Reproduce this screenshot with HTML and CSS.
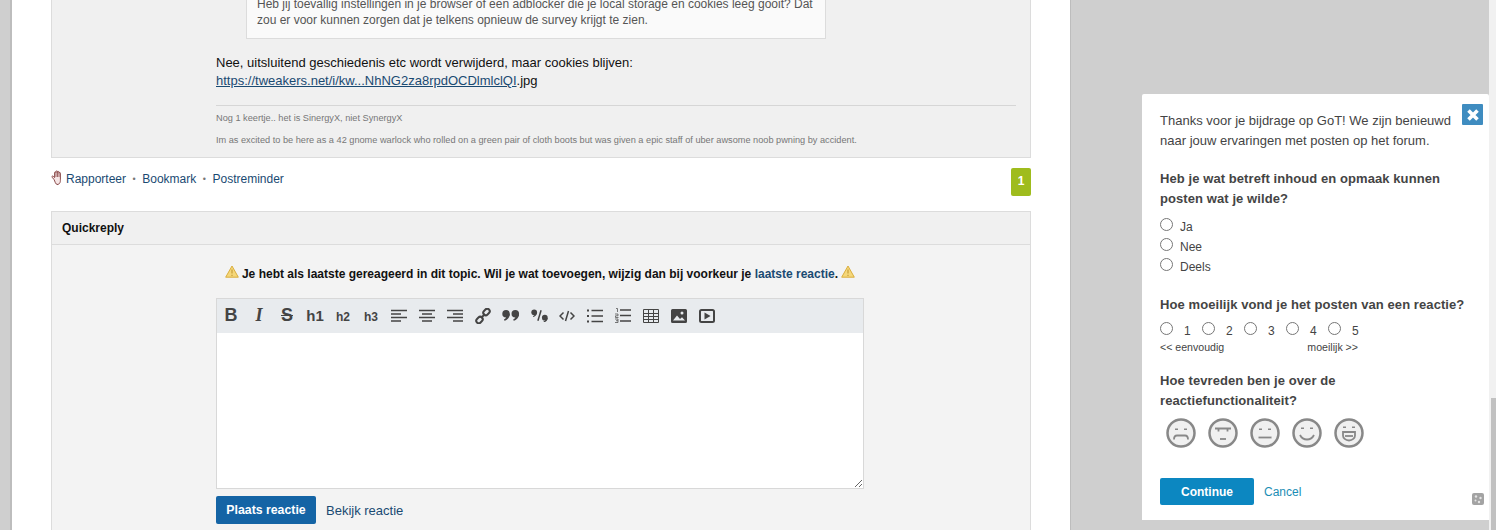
FILE: index.html
```html
<!DOCTYPE html>
<html lang="nl">
<head>
<meta charset="utf-8">
<title>Quickreply</title>
<link rel="stylesheet" href="styles.css">
</head>
<body>
<div class="page">
  <div class="gutter"></div>
  <main class="main">
    <section class="post">
      <blockquote class="quote">Heb jij toevallig instellingen in je browser of een adblocker die je local storage en cookies leeg gooit? Dat zou er voor kunnen zorgen dat je telkens opnieuw de survey krijgt te zien.</blockquote>
      <p class="post-text">Nee, uitsluitend geschiedenis etc wordt verwijderd, maar cookies blijven:<br><a href="#" class="post-link">https://tweakers.net/i/kw...NhNG2za8rpdOCDlmlclQI</a>.jpg</p>
      <div class="signature">
        <p class="sig-line sig-first">Nog 1 keertje.. het is SinergyX, niet SynergyX</p>
        <p class="sig-line">Im as excited to be here as a 42 gnome warlock who rolled on a green pair of cloth boots but was given a epic staff of uber awsome noob pwning by accident.</p>
      </div>
    </section>

    <div class="actions">
      <svg class="hand" viewBox="0 0 14 16" width="14" height="16"><path d="M3 9.500 1.200 7.300c-.8-.8.3-1.800 1.100-1L3.600 7.600V2.600c0-1 1.400-1 1.400 0V1.600c0-1 1.500-1 1.500 0v.6c0-1 1.500-1 1.500 0v1c0-1 1.400-1 1.400 0v6.600c0 .6.3 4.700-3.400 4.700H6.300C4.500 14.500 4 11.200 3 9.500Z" fill="#f6e6e6" stroke="#8a4a4a" stroke-width="1"/><path d="M5 2.500V7M6.500 2V7M8 2.500V7" stroke="#8a4a4a" stroke-width=".8" fill="none"/></svg>
      <a href="#" class="act-link">Rapporteer</a><span class="dot">•</span><a href="#" class="act-link">Bookmark</a><span class="dot">•</span><a href="#" class="act-link">Postreminder</a>
      <span class="badge">1</span>
    </div>

    <section class="reply">
      <h2 class="reply-head">Quickreply</h2>
      <div class="reply-body">
        <p class="notice"><svg class="warn" viewBox="0 0 14 13" width="14" height="13"><path d="M7 1 13.300 12.200H.7Z" fill="#f5d77a" stroke="#d9ad3c" stroke-width="1" stroke-linejoin="round"/><path d="M7 4.500v4M7 9.700v1.200" stroke="#c9a23f" stroke-width="1.300"/></svg> Je hebt als laatste gereageerd in dit topic. Wil je wat toevoegen, wijzig dan bij voorkeur je <a href="#" class="notice-link">laatste reactie</a>. <svg class="warn" viewBox="0 0 14 13" width="14" height="13"><path d="M7 1 13.300 12.200H.7Z" fill="#f5d77a" stroke="#d9ad3c" stroke-width="1" stroke-linejoin="round"/><path d="M7 4.500v4M7 9.700v1.200" stroke="#c9a23f" stroke-width="1.300"/></svg></p>
        <div class="editor">
          <div class="toolbar">
            <span class="tool tool-b">B</span>
            <span class="tool tool-i">I</span>
            <span class="tool tool-s">S</span>
            <span class="tool tool-h1">h1</span>
            <span class="tool tool-h">h2</span>
            <span class="tool tool-h">h3</span>
            <span class="tool"><svg viewBox="0 0 16 14" width="16" height="14"><path d="M0 1.500h16M0 5h10M0 8.500h16M0 12h10" stroke="#444" stroke-width="1.600"/></svg></span>
            <span class="tool"><svg viewBox="0 0 16 14" width="16" height="14"><path d="M0 1.500h16M3 5h10M0 8.500h16M3 12h10" stroke="#444" stroke-width="1.600"/></svg></span>
            <span class="tool"><svg viewBox="0 0 16 14" width="16" height="14"><path d="M0 1.500h16M6 5h10M0 8.500h16M6 12h10" stroke="#444" stroke-width="1.600"/></svg></span>
            <span class="tool"><svg viewBox="0 0 16 16" width="16" height="16"><g fill="none" stroke="#444" stroke-width="2"><rect x="8" y="1.500" width="7" height="5" rx="2.500" transform="rotate(-45 11.500 4)"/><rect x="1" y="9.500" width="7" height="5" rx="2.500" transform="rotate(-45 4.500 12)"/><path d="M6 10 10 6"/></g></svg></span>
            <span class="tool"><svg viewBox="0 0 16 10" width="18" height="11"><g fill="#444"><circle cx="3.500" cy="3.500" r="3.400"/><circle cx="11.900" cy="3.500" r="3.400"/><path d="M6.900 3.500C6.900 7 4.500 9.300 2 9.800L1.700 8.500C3.200 7.800 3.800 6.800 3.800 5ZM15.300 3.500c0 3.500-2.400 5.800-4.900 6.300l-.3-1.300c1.500-.7 2.100-1.700 2.100-3.500Z"/></g></svg></span>
            <span class="tool"><svg viewBox="0 0 16 12" width="17" height="13"><g fill="#444"><circle cx="3" cy="3" r="2.700"/><circle cx="13" cy="8" r="2.700"/><path d="M5.700 3C5.700 5.500 4 7 2 7.500L1.800 6.600C3 6 3.500 5.300 3.500 4ZM15.700 8c0 2.500-1.700 4-3.700 4.500l-.2-.9c1.200-.6 1.700-1.300 1.700-2.600Z"/></g><path d="M9.500 1 6.500 11" stroke="#444" stroke-width="1.400"/></svg></span>
            <span class="tool"><svg viewBox="0 0 16 12" width="16" height="12"><path d="M4.500 2.500 1 6l3.500 3.500M11.500 2.500 15 6l-3.500 3.500M9.500 1 6.500 11" fill="none" stroke="#444" stroke-width="1.500"/></svg></span>
            <span class="tool"><svg viewBox="0 0 16 14" width="16" height="14"><path d="M4.500 1.500H16M4.500 7H16M4.500 12.500H16" stroke="#444" stroke-width="1.600"/><path d="M0 1.500h2M0 7h2M0 12.500h2" stroke="#444" stroke-width="2"/></svg></span>
            <span class="tool"><svg viewBox="0 0 16 15" width="16" height="15"><path d="M5 2H16M5 7.500H16M5 13H16" stroke="#444" stroke-width="1.600"/><path d="M1 .5h1.500V4M0 6h3v1.800H.5v1.700h3M0 11h3v3.500H0M1 12.700h2" fill="none" stroke="#444" stroke-width=".7"/></svg></span>
            <span class="tool"><svg viewBox="0 0 16 14" width="16" height="14"><path d="M.5.5h15v13H.5ZM.5 4.500h15M.5 7.500h15M.5 10.500h15M5.500.5v13M10.500.5v13" fill="none" stroke="#444" stroke-width="1"/></svg></span>
            <span class="tool"><svg viewBox="0 0 16 14" width="16" height="14"><path d="M1.500 0h13A1.500 1.500 0 0 1 16 1.500v11a1.500 1.500 0 0 1-1.500 1.500h-13A1.500 1.500 0 0 1 0 12.500v-11A1.500 1.500 0 0 1 1.500 0Z" fill="#444"/><path d="M2 11.500 6 6.500l3 3.500 2-1.800 3 3.300Z" fill="#e8ebee"/><circle cx="11" cy="4" r="1.500" fill="#e8ebee"/></svg></span>
            <span class="tool"><svg viewBox="0 0 16 14" width="16" height="14"><rect x="1" y="1" width="14" height="12" rx="1.500" fill="none" stroke="#444" stroke-width="2"/><path d="M5.500 3.500v7L11.500 7Z" fill="#444"/></svg></span>
          </div>
          <textarea class="editor-area" aria-label="Reactie"></textarea>
        </div>
        <div class="reply-buttons">
          <button class="btn-primary" type="button">Plaats reactie</button>
          <a href="#" class="preview-link">Bekijk reactie</a>
        </div>
      </div>
    </section>
  </main>
  <div class="side"></div>

  <aside class="survey">
    <button class="close" type="button" aria-label="Sluiten"><svg viewBox="0 0 14 14" width="14" height="14"><path d="M2.500 2.500 11.500 11.500M11.500 2.500 2.500 11.500" stroke="#fff" stroke-width="3.600"/></svg></button>
    <p class="intro">Thanks voor je bijdrage op GoT! We zijn benieuwd naar jouw ervaringen met posten op het forum.</p>
    <h3 class="question q-first">Heb je wat betreft inhoud en opmaak kunnen posten wat je wilde?</h3>
    <div class="choices">
      <label class="choice"><input type="radio" name="a"><span>Ja</span></label>
      <label class="choice"><input type="radio" name="a"><span>Nee</span></label>
      <label class="choice"><input type="radio" name="a"><span>Deels</span></label>
    </div>
    <h3 class="question q-second">Hoe moeilijk vond je het posten van een reactie?</h3>
    <div class="scale">
      <label class="scale-item"><input type="radio" name="b"><span>1</span></label>
      <label class="scale-item"><input type="radio" name="b"><span>2</span></label>
      <label class="scale-item"><input type="radio" name="b"><span>3</span></label>
      <label class="scale-item"><input type="radio" name="b"><span>4</span></label>
      <label class="scale-item"><input type="radio" name="b"><span>5</span></label>
    </div>
    <div class="scale-ends"><span>&lt;&lt; eenvoudig</span><span>moeilijk &gt;&gt;</span></div>
    <h3 class="question q-third">Hoe tevreden ben je over de reactiefunctionaliteit?</h3>
    <div class="smileys">
      <svg viewBox="0 0 30 30" width="30" height="30"><circle cx="15" cy="15" r="13.500" class="face"/><path d="M10.500 10.500v1.500M19.500 10.500v1.500" class="eye"/><path d="M8 21.500c0-3 1-4 3-4h8c2 0 3 1 3 4" class="mouth"/></svg>
      <svg viewBox="0 0 30 30" width="30" height="30"><circle cx="15" cy="15" r="13.500" class="face"/><path d="M7 10.500h16M10.500 11v2.500M19.500 11v2.500" class="mouth"/><path d="M12 21h6" class="mouth"/></svg>
      <svg viewBox="0 0 30 30" width="30" height="30"><circle cx="15" cy="15" r="13.500" class="face"/><path d="M10.500 10.500v1.500M19.500 10.500v1.500" class="eye"/><path d="M8.500 19.500h13" class="mouth"/></svg>
      <svg viewBox="0 0 30 30" width="30" height="30"><circle cx="15" cy="15" r="13.500" class="face"/><path d="M10.500 9.500v1.500M19.500 9.500v1.500" class="eye"/><path d="M8 17c1.500 3 3.500 4.500 7 4.500s5.500-1.500 7-4.500" class="mouth"/></svg>
      <svg viewBox="0 0 30 30" width="30" height="30"><circle cx="15" cy="15" r="13.500" class="face"/><path d="M10.500 8.500v1.500M19.500 8.500v1.500" class="eye"/><path d="M9 14h12v3.500c0 2.500-2.500 5-6 5s-6-2.500-6-5Z" class="mouth"/><path d="M11 18h8" class="mouth"/></svg>
    </div>
    <div class="survey-buttons">
      <button class="btn-continue" type="button">Continue</button>
      <a href="#" class="cancel">Cancel</a>
    </div>
    <svg class="brand" viewBox="0 0 12 12" width="12" height="12"><rect width="12" height="12" rx="2" fill="#a3a3a3"/><g fill="#e4e4e4"><circle cx="4" cy="3.500" r="1.200"/><circle cx="8.500" cy="5" r="1.200"/><circle cx="3.500" cy="7.500" r="1"/><circle cx="7" cy="9" r="1.200"/></g></svg>
  </aside>

  <div class="scrollbar"><div class="scroll-thumb"></div></div>
</div>
</body>
</html>
```

FILE: styles.css
```css
* { box-sizing: border-box; }
html, body { margin: 0; padding: 0; height: 100%; overflow: hidden; }
body { font-family: "Liberation Sans", Arial, sans-serif; font-size: 12px; color: #000; background: #cfcfcf; }
a { color: #1a4a72; text-decoration: none; }
p, h2, h3 { margin: 0; }

.page { display: flex; position: relative; width: 1496px; height: 530px; overflow: hidden; }
.gutter { flex: 0 0 12px; background: #cfcfcf; border-right: 2px solid #bdbdbd; }
.main { flex: 0 0 1059px; background: #fff; padding: 0 39px 0 39px; border-right: 1px solid #bdbdbd; }
.side { flex: 1; background: #cfcfcf; }

.post { display: flow-root; width: 980px; height: 158px; background: #f0f0f0; border: 1px solid #dcdcdc; border-top: 0; padding-left: 164px; padding-right: 14px; }
.quote { margin: -6px 0 0 30px; width: 580px; height: 45px; background: #fafafa; border: 1px solid #dcdcdc; border-top: 0; padding: 2px 10px 0; color: #555; font-size: 12px; line-height: 16px; }
.post-text { margin-top: 15px; font-size: 13px; line-height: 18px; color: #111; }
.post-link { color: #1a4a72; text-decoration: underline; }
.signature { margin-top: 15px; border-top: 1px solid #d6d6d6; padding-top: 6px; color: #777; font-size: 9.200px; }
.sig-line { line-height: 12px; margin-top: 10px; }
.sig-first { margin-top: 0; }

.actions { display: flex; align-items: flex-start; width: 980px; height: 53px; padding-top: 14px; font-size: 12px; position: relative; }
.hand { margin: -2px 1px 0 0; flex: none; }
.act-link { line-height: 14px; color: #1a4a72; }
.dot { width: 16.200px; text-align: center; color: #777; line-height: 14px; font-size: 9px; }
.badge { margin: -4px 0 0 auto; width: 20px; height: 28px; background: #9fbc1d; border-radius: 2px; color: #fff; font-weight: bold; text-align: center; line-height: 26px; font-size: 12px; }

.reply { width: 980px; border: 1px solid #dcdcdc; background: #f3f3f3; }
.reply-head { height: 33px; background: #f0f0f0; border-bottom: 1px solid #dcdcdc; padding-left: 10px; line-height: 32px; font-size: 12px; font-weight: bold; color: #111; }
.reply-body { padding: 20px 0 0 164px; height: 290px; }
.notice { width: 648px; text-align: center; height: 18px; line-height: 18px; font-size: 12px; font-weight: bold; color: #111; white-space: nowrap; }
.notice-link { color: #1a4a72; }
.warn { vertical-align: 0; }
.editor { margin-top: 15px; width: 648px; height: 191px; border: 1px solid #d8d8d8; background: #fff; display: flex; flex-direction: column; }
.toolbar { flex: 0 0 34px; background: #e8ebee; display: flex; align-items: center; padding-bottom: 1px; }
.tool { flex: 0 0 28px; height: 28px; display: flex; align-items: center; justify-content: center; color: #444; font-weight: bold; }
.tool-b { font-size: 18px; }
.tool-i { font-size: 18px; font-style: italic; font-family: "Liberation Serif", serif; }
.tool-s { font-size: 18px; text-decoration: line-through; font-weight: bold; }
.tool-h1 { font-size: 15px; }
.tool-h { font-size: 12px; padding-top: 2px; }
.editor-area { flex: 1; display: block; width: 100%; border: 0; background: #fff; margin: 0; padding: 4px; outline: 0; }
.reply-buttons { margin-top: 7px; display: flex; align-items: center; gap: 10px; }
.btn-primary { width: 100px; height: 28px; background: #1464a5; color: #fff; border: 0; border-radius: 2px; font: bold 12.300px "Liberation Sans", Arial, sans-serif; padding: 0; }
.preview-link { font-size: 13px; color: #1a4a72; }

.survey { position: absolute; left: 1142px; top: 94px; width: 347px; height: 426px; background: #fff; padding: 17px 18px 0; border-radius: 2px 2px 0 0; color: #444; }
.close { position: absolute; left: 320px; top: 10px; width: 21px; height: 21px; padding: 0; border: 0; border-radius: 1px; background: #3f8cc0; display: flex; align-items: center; justify-content: center; }
.intro { font-size: 13px; line-height: 20px; width: 304px; }
.question { font-size: 13px; line-height: 20px; font-weight: bold; letter-spacing: .08px; }
.q-first { margin-top: 18px; width: 300px; }
.q-second { margin-top: 20px; }
.q-third { margin-top: 18px; width: 250px; }
.choices { margin-top: 6px; }
.choice { display: flex; align-items: center; height: 20px; font-size: 12px; }
.choice input { margin: 0 7px 2px 0; width: 13px; height: 13px; flex: none; }
.choice span { padding-top: 3px; }
.scale { display: flex; margin-top: 4px; height: 20px; }
.scale-item { flex: 0 0 42px; display: flex; align-items: center; font-size: 12px; }
.scale-item input { margin: 0 11px 2px 0; width: 13px; height: 13px; flex: none; }
.scale-item span { padding-top: 3px; }
.scale-ends { display: flex; justify-content: space-between; width: 198px; font-size: 10.600px; line-height: 12px; margin-top: 2px; }
.smileys { display: flex; gap: 12px; margin: 7px 0 0 6px; }
.face { fill: #f0f0f0; stroke: #888; stroke-width: 2.500; }
.eye { stroke: #888; stroke-width: 3; fill: none; }
.mouth { stroke: #888; stroke-width: 1.800; fill: none; }
.survey-buttons { display: flex; align-items: center; gap: 10px; margin-top: 30px; }
.btn-continue { width: 94px; height: 27px; background: #0c87c1; color: #fff; border: 0; border-radius: 2px; font: bold 12px "Liberation Sans", Arial, sans-serif; }
.cancel { color: #1b8eb5; font-size: 12px; }
.brand { position: absolute; left: 330px; top: 399px; }

.scrollbar { position: absolute; left: 1489px; top: 0; width: 7px; height: 530px; background: #f1f1f1; }
.scroll-thumb { position: absolute; left: 2px; top: 398px; width: 5px; height: 132px; background: #c1c1c1; }
```
